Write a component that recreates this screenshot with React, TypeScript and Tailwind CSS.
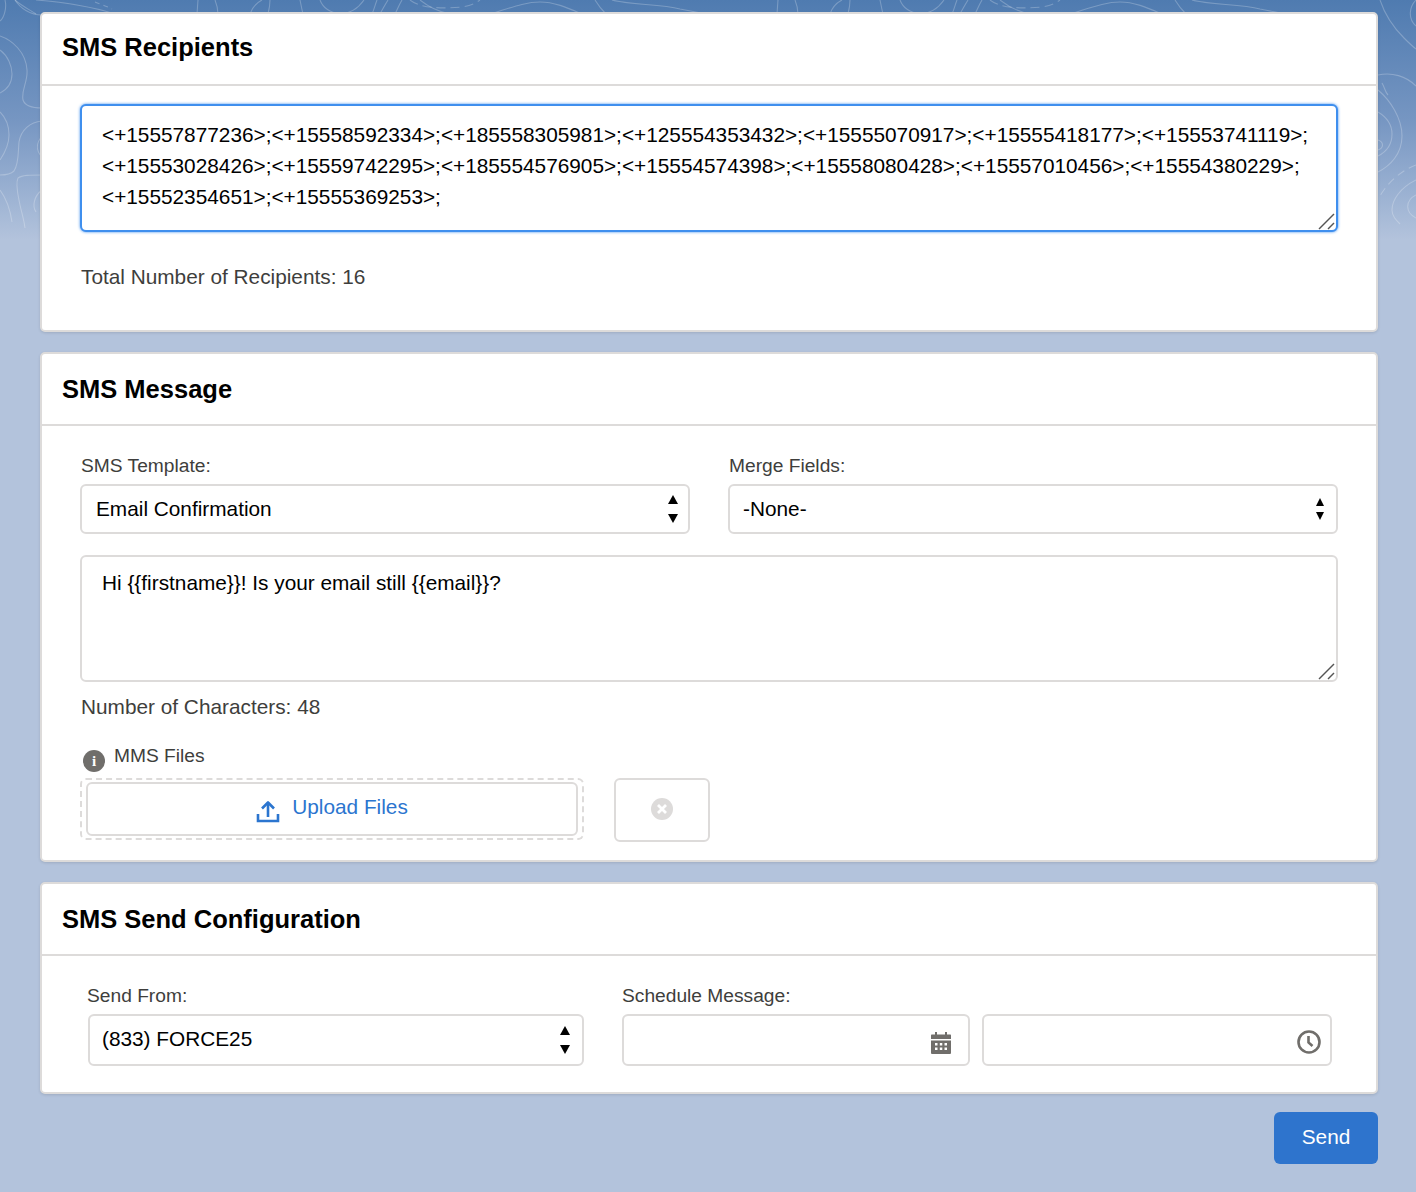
import React from "react";

const FONT = "font-['Liberation_Sans',Arial,sans-serif]";

function TopLines() {
  return (
    <>
      <path d="M198 0L197 14" />
      <path d="M215 0C217 5 218 10 218 14" />
      <path d="M250 14C252 8 256 3 262 0" />
      <path d="M270 0C270 5 269 10 268 14" />
      <path d="M300 0C301 5 302 10 303 14" />
      <path d="M320 0C326 16 350 20 364 0" />
      <path d="M377 0C375 5 374 10 372 14" />
      <path d="M388 0C385 5 382 10 380 14" />
      <path d="M402 0C399 5 397 10 395 14" />
      <path d="M410 0C420 8 440 9 462 7C470 6 476 3 480 0" strokeDasharray="9 5" />
      <path d="M420 0C430 8 440 12 450 14" />
      <path d="M490 14C510 8 525 2 540 2C555 2 568 8 582 14" />
      <path d="M595 0C598 5 602 10 606 14" />
      <path d="M612 0C630 5 660 4 680 9C690 11 700 13 708 14" />
    </>
  );
}

function Contours() {
  return (
    <svg className="absolute left-0 top-0 h-[240px] w-full" viewBox="0 0 1416 240" fill="none" stroke="#ffffff" strokeWidth="1.1" strokeOpacity="0.24">
      <path d="M5 0C7 8 4 18 0 21" />
      <path d="M15 0C20 8 30 15 42 15" />
      <path d="M0 36C12 40 26 52 27 70C28 82 21 90 23 100C25 106 33 108 42 108" />
      <path d="M0 50C8 56 12 66 12 74C12 84 6 90 0 93" />
      <path d="M0 112C6 118 9 126 9 135C9 146 4 154 0 160" />
      <path d="M42 121C30 122 21 130 19 142C18 152 19 164 14 171C10 175 4 175 0 175" />
      <path d="M42 175C30 175 22 175 18 178C15 184 18 195 20 205C22 214 24 220 25 228" />
      <path d="M0 190C6 198 10 208 12 222" />
      <path d="M42 136C37 142 35 150 42 157" />
      <path d="M42 190C34 196 32 206 36 212" />
      <path d="M1380 0C1384 12 1392 26 1404 38C1408 42 1412 46 1416 49" />
      <path d="M1416 0C1410 6 1407 18 1416 26" />
      <path d="M1378 75C1392 72 1406 76 1416 86" />
      <path d="M1382 83C1385 88 1385 92 1388 95" />
      <path d="M1378 90C1390 100 1402 118 1402 136C1402 154 1390 166 1378 172" />
      <path d="M1378 112C1388 118 1392 126 1392 134C1392 146 1386 152 1378 156" />
      <path d="M1378 140C1384 142 1384 148 1378 150" />
      <path d="M1416 165C1402 170 1388 182 1380 196" strokeDasharray="8 5" />
      <path d="M1416 180C1400 188 1392 200 1392 210C1392 216 1396 220 1400 224" />
      <path d="M1416 195C1406 200 1404 212 1416 218" />
      <path d="M15 0C22 6 30 10 36 14" />
      <path d="M36 0C60 2 90 6 115 14" />
      <path d="M95 2C100 4 106 6 112 9" strokeDasharray="5 4" />
      <TopLines />
      <g transform="translate(580 0)">
        <TopLines />
      </g>
    </svg>
  );
}

function Card({ title, children, className, titleClass = "pt-[2px]" }: { title: string; children: React.ReactNode; className: string; titleClass?: string }) {
  return (
    <section className={`rounded-[5px] border-2 border-[#dddbda] bg-white shadow-[0_1px_3px_rgba(0,0,0,0.12)] ${className}`}>
      <h2 className={`flex h-[72px] items-center border-b-2 border-[#dddbda] pl-5 text-[25.5px] font-bold leading-none text-black ${titleClass}`}>{title}</h2>
      {children}
    </section>
  );
}

function Arrows({ large }: { large?: boolean }) {
  return (
    <svg width="12" height={large ? 30 : 26} viewBox={large ? "0 0 12 30" : "0 0 12 26"} className="shrink-0" fill="#000">
      {large ? (
        <>
          <path d="M6 1L11 10H1Z" />
          <path d="M6 29L11 20H1Z" />
        </>
      ) : (
        <>
          <path d="M6 2L10 10H2Z" />
          <path d="M6 24L10 16H2Z" />
        </>
      )}
    </svg>
  );
}

function SelectBox({ value, className, textClass, arrowsLarge }: { value: string; className: string; textClass: string; arrowsLarge?: boolean }) {
  return (
    <div className={`flex items-center justify-between rounded-[6px] border-2 border-[#dddbda] bg-white text-[20.8px] leading-none text-black ${className}`}>
      <span className={textClass}>{value}</span>
      <Arrows large={arrowsLarge} />
    </div>
  );
}

function Area({ value, className }: { value: string; className: string }) {
  return (
    <div className="relative">
      <textarea
        readOnly
        defaultValue={value}
        wrap="off"
        className={`block w-full resize-none overflow-hidden rounded-[6px] border-2 bg-white px-5 text-[20.8px] leading-[31px] text-black outline-none ${className}`}
      />
      <svg className="absolute bottom-[2px] right-[2px]" width="18" height="18" viewBox="0 0 18 18" fill="none" stroke="#555" strokeWidth="1.4">
        <path d="M1 17L16 2" />
        <path d="M10 17L16 11" />
      </svg>
    </div>
  );
}

export default function App() {
  const recipients = [
    "<+15557877236>;<+15558592334>;<+185558305981>;<+125554353432>;<+15555070917>;<+15555418177>;<+15553741119>;",
    "<+15553028426>;<+15559742295>;<+185554576905>;<+15554574398>;<+15558080428>;<+15557010456>;<+15554380229>;",
    "<+15552354651>;<+15555369253>;",
  ].join("\n");

  return (
    <div className={`relative min-h-[1192px] overflow-hidden bg-[#b3c3dc] ${FONT}`}>
      <div className="absolute inset-x-0 top-0 h-[240px] bg-gradient-to-b from-[#4f7bb0] via-[#7696c2] to-[#b3c3dc]" />
      <Contours />
      <main className="relative flex flex-col pl-10 pr-[38px] pt-3">
        <Card title="SMS Recipients" titleClass="pb-[2px]" className="h-[320px]">
          <div className="px-[38px] pt-[18px]">
            <Area value={recipients} className="h-[128px] border-[#3f8fee] py-[13px] shadow-[0_0_3px_#3f8fee]" />
            <p className="mt-[33px] pl-px text-[20.8px] leading-6 text-[#3e3e3c]">Total Number of Recipients: 16</p>
          </div>
        </Card>

        <Card title="SMS Message" className="mt-5 h-[510px]">
          <div className="px-[38px] pt-[28px]">
            <div className="flex gap-[38px]">
              <div className="w-[610px]">
                <div className="pl-px text-[19.2px] leading-6 text-[#3e3e3c]">SMS Template:</div>
                <SelectBox value="Email Confirmation" arrowsLarge textClass="" className="mt-[6px] h-[50px] pl-[14px] pr-[9px]" />
              </div>
              <div className="flex-1">
                <div className="pl-px text-[19.2px] leading-6 text-[#3e3e3c]">Merge Fields:</div>
                <SelectBox value="-None-" textClass="" className="mt-[6px] h-[50px] pl-[13px] pr-[10px]" />
              </div>
            </div>
            <div className="mt-[21px]">
              <Area value="Hi {{firstname}}! Is your email still {{email}}?" className="h-[127px] border-[#dddbda] py-[10px]" />
            </div>
            <p className="mt-[13px] pl-px text-[20.8px] leading-6 text-[#3e3e3c]">Number of Characters: 48</p>
            <div className="mt-[25px] flex items-start gap-[9px] pl-[3px]">
              <span className="mt-[6px] flex h-[22px] w-[22px] items-center justify-center rounded-full bg-[#706e6b] font-['Liberation_Serif',serif] text-[15px] font-bold leading-none text-white">i</span>
              <span className="text-[19.2px] leading-6 text-[#3e3e3c]">MMS Files</span>
            </div>
            <div className="mt-[6px] flex items-start gap-[30px]">
              <div className="h-[62px] w-[504px] rounded-[6px] border-2 border-dashed border-[#dddbda] px-[4px] py-[2px]">
                <button className="flex h-full w-full items-center justify-center gap-[12px] rounded-[6px] border-2 border-[#dddbda] bg-white text-[20.8px] text-[#2b75cf]">
                  <svg width="24" height="24" viewBox="0 0 24 24" fill="none" stroke="#2b75cf" strokeWidth="2.6" className="mt-1">
                    <path d="M2 15v7h20v-7" />
                    <path d="M12 18V4" />
                    <path d="M6 9.500L12 3.500L18 9.500" strokeLinejoin="round" />
                  </svg>
                  <span className="pb-[4px]">Upload Files</span>
                </button>
              </div>
              <button className="flex h-[64px] w-[96px] items-center justify-center rounded-[6px] border-2 border-[#dddbda] bg-white pb-[2px]">
                <svg width="22" height="22" viewBox="0 0 22 22">
                  <circle cx="11" cy="11" r="11" fill="#dddbda" />
                  <path d="M7 7L15 15M15 7L7 15" stroke="#fff" strokeWidth="2.800" />
                </svg>
              </button>
            </div>
          </div>
        </Card>

        <Card title="SMS Send Configuration" className="mt-5 h-[212px]">
          <div className="flex pl-[46px] pt-[28px]">
            <div className="w-[496px]">
              <div className="-ml-px text-[19.2px] leading-6 text-[#3e3e3c]">Send From:</div>
              <SelectBox value="(833) FORCE25" arrowsLarge textClass="pb-[2px]" className="mt-[6px] h-[52px] pl-3 pr-[11px]" />
            </div>
            <div className="ml-[38px]">
              <div className="text-[19.2px] leading-6 text-[#3e3e3c]">Schedule Message:</div>
              <div className="mt-[6px] flex gap-3">
                <div className="flex h-[52px] w-[348px] items-center justify-end rounded-[6px] border-2 border-[#dddbda] bg-white pr-[17px]">
                  <svg width="20" height="22" viewBox="0 0 20 22" fill="#706e6b" className="mt-[6px]">
                    <path d="M4 0h2v3H4zM14 0h2v3h-2z" />
                    <path d="M1 2.500h18c.6 0 1 .4 1 1V7H0V3.500c0-.6.4-1 1-1z" />
                    <path fillRule="evenodd" d="M0 8.500h20V21a1 1 0 0 1-1 1H1a1 1 0 0 1-1-1zM4 11v2.500h2.500V11zM8.800 11v2.500h2.500V11zM13.500 11v2.500H16V11zM4 15.500V18h2.500v-2.500zM8.800 15.500V18h2.500v-2.500zM13.500 15.500V18H16v-2.500z" />
                  </svg>
                </div>
                <div className="flex h-[52px] w-[350px] items-center justify-end rounded-[6px] border-2 border-[#dddbda] bg-white pr-[9px]">
                  <svg width="24" height="24" viewBox="0 0 24 24" fill="none" stroke="#706e6b" className="mt-[3px]">
                    <circle cx="12" cy="12" r="10.500" strokeWidth="2.600" />
                    <path d="M11.500 6v6.500l4 3.500" strokeWidth="2.600" />
                  </svg>
                </div>
              </div>
            </div>
          </div>
        </Card>

        <div className="mt-[18px] flex justify-end">
          <button className="h-[52px] w-[104px] rounded-[6px] bg-[#2e74cd] pb-[2px] text-[20.8px] text-white">Send</button>
        </div>
      </main>
    </div>
  );
}
